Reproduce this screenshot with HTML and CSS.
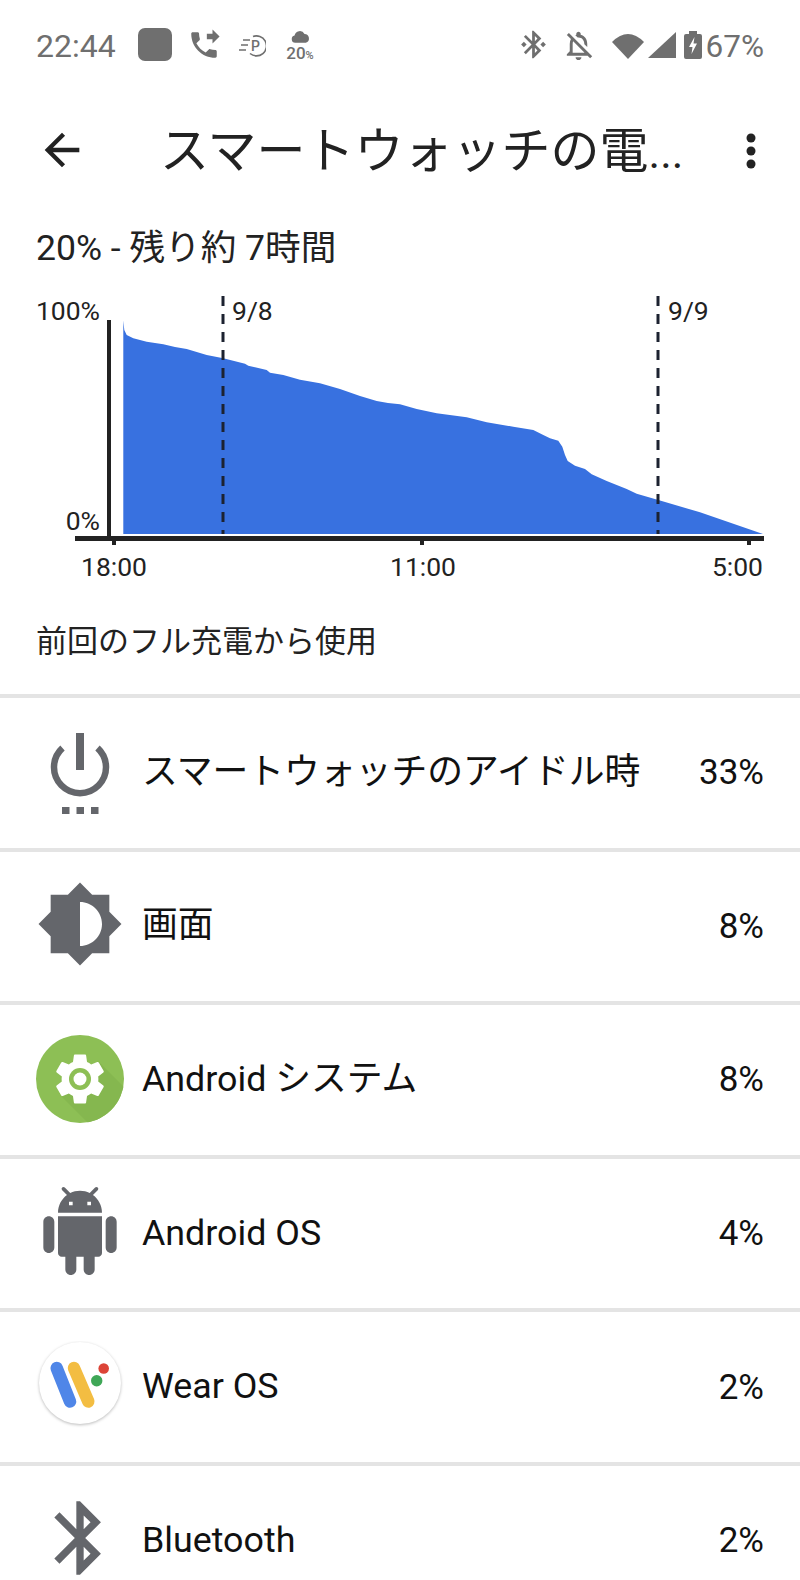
FILE: index.html
```html
<!DOCTYPE html>
<html lang="ja">
    <head>
        <meta charset="utf-8" />
        <meta name="viewport" content="width=device-width, initial-scale=1.0">
        <title>スマートウォッチの電池</title>
        <link rel="stylesheet" href="styles.css">
    </head>
    <body>
        <!-- status bar -->
        <div class="status">
            <span class="clock">22:44</span>
            <div class="app-square"></div>
            <svg class="st-phone" viewBox="0 0 24 24"><path d="M18 11l5-5-5-5v3h-4v4h4v3zm2 4.500c-1.250 0-2.450-.2-3.570-.57-.35-.11-.74-.03-1.020.24l-2.200 2.200c-2.830-1.440-5.150-3.750-6.590-6.590l2.200-2.210c.28-.26.36-.65.25-1C8.700 6.450 8.500 5.250 8.500 4c0-.55-.45-1-1-1H4c-.55 0-1 .45-1 1 0 9.390 7.610 17 17 17 .55 0 1-.45 1-1v-3.500c0-.55-.45-1-1-1z"/></svg>
            <svg class="st-park" viewBox="0 0 28 24">
                <path class="st-line" d="M15 3.500a10 10 0 1 1-3 17"/>
                <path class="st-line" d="M5 7h7M3 12h7M1 17h7"/>
                <text x="13" y="18" class="st-p">P</text>
            </svg>
            <div class="weather">
                <svg class="st-cloud" viewBox="0 0 18 12"><path d="M4 12a3.500 3.500 0 0 1-.6-6.900A5 5 0 0 1 12.800 3.600 4.300 4.300 0 0 1 14 12z"/></svg>
                <span class="weather-text">20<small>%</small></span>
            </div>

            <svg class="st-bt" viewBox="0 0 24 24"><path d="M7 12l-2-2-2 2 2 2 2-2zm10.710-4.290L12 2h-1v7.590L6.410 5 5 6.410 10.590 12 5 17.590 6.410 19 11 14.410V22h1l5.710-5.710-4.300-4.290 4.300-4.290zM13 5.830l1.880 1.880L13 9.590V5.830zm1.880 10.460L13 18.170v-3.760l1.880 1.880zM19 10l-2 2 2 2 2-2-2-2z"/></svg>
            <svg class="st-bell" viewBox="0 0 24 24"><path d="M12 22c1.100 0 2-.9 2-2h-4c0 1.100.9 2 2 2zm0-15.500c2.490 0 4 2.020 4 4.500v.1l2 2V11c0-3.070-1.630-5.640-4.500-6.320V4c0-.83-.67-1.500-1.500-1.500s-1.500.67-1.500 1.500v.68c-.24.06-.47.15-.69.23l1.640 1.640c.18-.02.36-.05.55-.05zM5.410 3.350L4 4.760l2.810 2.810C6.290 8.570 6 9.740 6 11v5l-2 2v1h14.240l1.740 1.740 1.410-1.410L5.410 3.350zM16 17H8v-6c0-.68.12-1.320.34-1.900L16 16.760V17z"/></svg>
            <svg class="st-wifi" viewBox="0 0 32 28"><path d="M16 28L0 11Q16-5 32 11z"/></svg>
            <svg class="st-signal" viewBox="0 0 28 26"><path d="M0 26L28 0v26z"/></svg>
            <svg class="st-battery" viewBox="0 0 18 28">
                <path d="M5 0h8v3h3a2 2 0 0 1 2 2v21a2 2 0 0 1-2 2H2a2 2 0 0 1-2-2V5a2 2 0 0 1 2-2h3z"/>
                <path class="st-bolt" d="M10.500 6L5 16h3.500l-1 7L13 12.500H9.500z"/>
            </svg>
            <span class="battery-text">67%</span>
        </div>

        <!-- toolbar -->
        <div class="toolbar">
            <svg class="back" viewBox="0 0 24 24"><path d="M20 11H7.830l5.590-5.590L12 4l-8 8 8 8 1.410-1.410L7.830 13H20v-2z"/></svg>
            <h1 class="title">スマートウォッチの電<span class="dots">...</span></h1>
            <svg class="more" viewBox="0 0 10 36">
                <circle cx="5" cy="5" r="4.500"/>
                <circle cx="5" cy="18" r="4.500"/>
                <circle cx="5" cy="31" r="4.500"/>
            </svg>
        </div>

        <div class="summary">20% - 残り約 7時間</div>

        <!-- battery graph -->
        <svg class="chart" viewBox="0 286 800 330">
            <path class="area" d="M123.300 320.500L124.300 330 126.700 335 133.300 338.300 146.700 341.700 163.300 344.300 175 347 186.700 349 206.700 355 223.300 358.300 245 363.700 248.300 365.700 266.700 370 270 372.700 283.300 375 300 379.700 320 383.300 340 389 360 396 376.700 401 388 403 400 404.300 416.700 409 436.700 413.300 466.700 417.300 486.700 422.300 513.300 426.700 533.300 430 543.300 435 550 438.300 558.300 440.700 562.300 446.700 565 455 567.700 461 575 465.700 585 469 591.700 474.300 606.700 481 626.700 489 636.700 493.700 658.300 500 700 512.300 763 534 123.300 534z"/>
            <line class="day-line" x1="223" y1="296" x2="223" y2="534"/>
            <line class="day-line" x1="658" y1="296" x2="658" y2="534"/>
            <rect class="axis" x="107" y="320" width="4" height="220"/>
            <rect class="axis" x="75" y="536" width="689" height="5"/>
            <rect class="axis" x="112" y="541" width="4" height="4"/>
            <rect class="axis" x="420" y="541" width="4" height="4"/>
            <rect class="axis" x="747" y="541" width="4" height="4"/>
            <text class="chart-text end" x="100" y="320">100%</text>
            <text class="chart-text end" x="100" y="530">0%</text>
            <text class="chart-text" x="232" y="320">9/8</text>
            <text class="chart-text" x="668" y="320">9/9</text>
            <text class="chart-text" x="81" y="576">18:00</text>
            <text class="chart-text" x="390" y="576">11:00</text>
            <text class="chart-text end" x="763" y="576">5:00</text>
        </svg>

        <div class="since">前回のフル充電から使用</div>

        <!-- usage list -->
        <div class="row">
            <svg class="row-icon" viewBox="0 0 88 88">
                <path class="power-arc" d="M26.500 22A26 26 0 1 0 61.500 22"/>
                <rect x="40" y="7" width="8" height="37"/>
                <rect x="26" y="81" width="7.500" height="7"/>
                <rect x="40.500" y="81" width="7.500" height="7"/>
                <rect x="55" y="81" width="7.500" height="7"/>
            </svg>
            <span class="label">スマートウォッチのアイドル時</span>
            <span class="pct">33%</span>
        </div>
        <div class="row">
            <svg class="row-icon" viewBox="0 0 24 24"><path d="M20 15.310L23.310 12 20 8.690V4h-4.690L12 .69 8.690 4H4v4.690L.69 12 4 15.310V20h4.690L12 23.310 15.310 20H20v-4.690zM12 18V6c3.310 0 6 2.690 6 6s-2.690 6-6 6z"/></svg>
            <span class="label">画面</span>
            <span class="pct">8%</span>
        </div>
        <div class="row">
            <svg class="row-icon sys" viewBox="0 0 88 88">
                <defs><clipPath id="disc"><circle cx="44" cy="44" r="44"/></clipPath></defs>
                <circle class="sys-bg" cx="44" cy="44" r="44"/>
                <path class="sys-shade" clip-path="url(#disc)" d="M62 26L100 64V100H64L26 62z"/>
                <path class="sys-gear" transform="translate(13.400 13.400) scale(2.550)" d="M19.140 12.940c.04-.3.06-.61.06-.94 0-.32-.02-.64-.07-.94l2.030-1.580c.18-.14.23-.41.12-.61l-1.920-3.320c-.12-.22-.37-.29-.59-.22l-2.390.96c-.5-.38-1.030-.7-1.620-.94l-.36-2.540c-.04-.24-.24-.41-.48-.41h-3.840c-.24 0-.43.17-.47.41l-.36 2.540c-.59.24-1.130.57-1.620.94l-2.390-.96c-.22-.08-.47 0-.59.22L2.740 8.870c-.12.21-.08.47.12.61l2.030 1.580c-.05.3-.09.63-.09.94s.02.64.07.94l-2.030 1.580c-.18.14-.23.41-.12.61l1.920 3.320c.12.22.37.29.59.22l2.390-.96c.5.38 1.030.7 1.620.94l.36 2.540c.05.24.24.41.48.41h3.840c.24 0 .44-.17.47-.41l.36-2.540c.59-.24 1.130-.56 1.620-.94l2.390.96c.22.08.47 0 .59-.22l1.920-3.320c.12-.22.07-.47-.12-.61l-2.010-1.580z"/>
                <circle class="sys-bg" cx="44" cy="44" r="11"/>
                <circle class="sys-gear" cx="44" cy="44" r="6.500"/>
            </svg>
            <span class="label">Android システム</span>
            <span class="pct">8%</span>
        </div>
        <div class="row">
            <svg class="row-icon" viewBox="0 0 24 24"><path d="M6 18c0 .55.45 1 1 1h1v3.500c0 .83.67 1.500 1.500 1.500s1.500-.67 1.500-1.500V19h2v3.500c0 .83.67 1.500 1.500 1.500s1.500-.67 1.500-1.500V19h1c.55 0 1-.45 1-1V8H6v10zM3.500 8C2.670 8 2 8.670 2 9.500v7c0 .83.67 1.500 1.500 1.500S5 17.330 5 16.500v-7C5 8.670 4.330 8 3.500 8zm17 0c-.83 0-1.500.67-1.500 1.500v7c0 .83.67 1.500 1.500 1.500s1.500-.67 1.500-1.500v-7c0-.83-.67-1.500-1.500-1.500zm-4.970-5.840l1.300-1.300c.2-.2.2-.51 0-.71-.2-.2-.51-.2-.71 0l-1.480 1.480C13.850 1.230 12.950 1 12 1c-.96 0-1.860.23-2.660.63L7.850.15c-.2-.2-.51-.2-.71 0-.2.2-.2.51 0 .71l1.310 1.310C6.970 3.260 6 5.010 6 7h12c0-1.990-.97-3.750-2.470-4.840zM10 5H9V4h1v1zm5 0h-1V4h1v1z"/></svg>
            <span class="label">Android OS</span>
            <span class="pct">4%</span>
        </div>
        <div class="row">
            <svg class="row-icon wear" viewBox="0 0 88 88">
                <circle class="wear-bg" cx="44" cy="42" r="41"/>
                <line class="wear-stroke blue" x1="20.700" y1="27.100" x2="34" y2="60.500"/>
                <line class="wear-stroke yellow" x1="38" y1="27.100" x2="52.300" y2="60.500"/>
                <circle class="wear-green" cx="60.700" cy="39.800" r="5.700"/>
                <circle class="wear-red" cx="67.700" cy="27.500" r="5.300"/>
            </svg>
            <span class="label">Wear OS</span>
            <span class="pct">2%</span>
        </div>
        <div class="row">
            <svg class="row-icon" viewBox="0 0 24 24"><path d="M17.710 7.710L12 2h-1v7.590L6.410 5 5 6.410 10.590 12 5 17.590 6.410 19 11 14.410V22h1l5.710-5.710-4.300-4.290 4.300-4.290zM13 5.830l1.880 1.880L13 9.590V5.830zm1.880 10.460L13 18.170v-3.760l1.880 1.880z"/></svg>
            <span class="label">Bluetooth</span>
            <span class="pct">2%</span>
        </div>
    </body>
</html>
```

FILE: styles.css
```css
html, body {
    height: 1580px;
    overflow: hidden;
}

body {
    margin: 0;
    background-color: white;
    color: #222;
    font-family: Roboto, "Noto Sans CJK JP", sans-serif;
}

/* status bar */
.status {
    display: flex;
    align-items: center;
    height: 92px;
    padding: 0 36px;
    color: #6f6f6f;
    fill: #6f6f6f;
}

.status svg {
    flex: none;
    margin-bottom: 3px;
}

.clock {
    font-size: 32px;
    width: 78px;
    white-space: nowrap;
}

.app-square {
    width: 34px;
    height: 33px;
    margin: 0 15px 3px 24px;
    background-color: #6f6f6f;
    border-radius: 7px;
}

.st-phone {
    width: 34px;
    height: 34px;
    margin-right: 17px;
}

.st-park {
    width: 28px;
    height: 24px;
    margin-right: 19px;
}

.st-line {
    fill: none;
    stroke: #6f6f6f;
    stroke-width: 1.600;
}

.st-p {
    font-size: 14px;
    font-weight: 500;
}

.weather {
    display: flex;
    flex-direction: column;
    align-items: center;
    width: 30px;
    margin-top: 3px;
}

.weather svg {
    width: 19px;
    height: 13px;
    margin-bottom: 1px;
}

.weather-text {
    font-size: 17px;
    line-height: 18px;
    font-weight: 500;
}

.weather-text small {
    font-size: 11px;
}

.st-bt {
    width: 33px;
    height: 33px;
    margin-left: auto;
    margin-right: 11px;
}

.status .st-bell {
    width: 35px;
    height: 35px;
    margin-right: 16px;
    margin-bottom: 1px;
}

.st-wifi {
    width: 32px;
    height: 28px;
    margin-right: 4px;
}

.st-signal {
    width: 28px;
    height: 26px;
    margin-right: 8px;
}

.st-battery {
    width: 18px;
    height: 28px;
    margin-right: 4px;
}

.st-bolt {
    fill: white;
}

.battery-text {
    font-size: 31.500px;
}

/* toolbar */
.toolbar {
    display: flex;
    align-items: center;
    height: 116px;
    padding-left: 36px;
}

.back {
    width: 52px;
    height: 52px;
    fill: #222;
    margin-right: 72px;
}

.title {
    margin: 4px 0 0;
    font-size: 49px;
    font-weight: 400;
    line-height: 60px;
    white-space: nowrap;
    width: 586px;
}

.dots {
    font-size: 44px;
    font-family: Roboto, sans-serif;
}

.more {
    width: 10px;
    height: 36px;
    margin-top: 2px;
    fill: #222;
}

.summary {
    height: 78px;
    padding-left: 36px;
    font-size: 35.600px;
    line-height: 80px;
}

/* graph */
.chart {
    display: block;
    width: 800px;
    height: 330px;
}

.area {
    fill: #3871e0;
}

.day-line {
    stroke: #1c2230;
    stroke-width: 3;
    stroke-dasharray: 10 8;
}

.axis {
    fill: #222;
}

.chart-text {
    font-size: 26.500px;
    fill: #222;
}

.end {
    text-anchor: end;
}

.since {
    height: 78px;
    padding-left: 36px;
    font-size: 31px;
    line-height: 52px;
}

/* usage list */
.row {
    display: flex;
    align-items: center;
    gap: 18px;
    box-sizing: border-box;
    height: 153.600px;
    padding: 0 36px;
    border-top: 4px solid #e4e4e4;
    color: #111;
    font-size: 35.800px;
}

.row-icon {
    flex: none;
    width: 88px;
    height: 88px;
    margin-bottom: 5px;
    fill: #64666b;
}

.row-icon.sys {
    margin-bottom: 1px;
}

.label {
    flex: 1;
    margin-bottom: 2px;
    line-height: 44px;
    white-space: nowrap;
}

.pct {
    font-size: 35px;
}

.power-arc {
    fill: none;
    stroke: #64666b;
    stroke-width: 6.500;
}

.sys-bg {
    fill: #8dbf55;
}

.sys-shade {
    fill: #85b74f;
}

.sys-gear {
    fill: white;
}

.wear-bg {
    fill: white;
    filter: drop-shadow(0 1px 1.500px #bbb);
}

.wear-stroke {
    fill: none;
    stroke-width: 12.500;
    stroke-linecap: round;
}

.blue {
    stroke: #4f86e8;
}

.yellow {
    stroke: #f3bd42;
}

.wear-green {
    fill: #3fa757;
}

.wear-red {
    fill: #dc4437;
}
```
